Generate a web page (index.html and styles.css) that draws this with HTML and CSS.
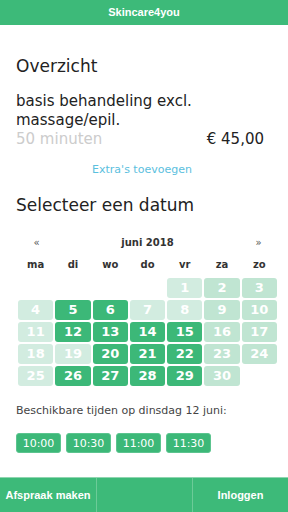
FILE: index.html
```html
<!DOCTYPE html>
<html lang="nl">
<head>
  <meta charset="UTF-8">
  <title>Skincare4you</title>
  <link rel="stylesheet" href="styles.css">
</head>
<body>
  <header class="topbar">Skincare4you</header>

  <main class="content">
    <h2 class="section-title">Overzicht</h2>

    <div class="treatment">
      <div class="treatment-name">basis behandeling excl. massage/epil.</div>
      <div class="treatment-meta">
        <span class="duration">50 minuten</span>
        <span class="price">€ 45,00</span>
      </div>
    </div>

    <a class="extras" href="#">Extra's toevoegen</a>

    <h2 class="section-title date-title">Selecteer een datum</h2>

    <div class="calendar">
      <div class="cal-head">
        <span class="cal-nav">«</span>
        <span class="cal-month">juni 2018</span>
        <span class="cal-nav">»</span>
      </div>
      <div class="cal-grid">
        <span class="dow">ma</span><span class="dow">di</span><span class="dow">wo</span><span class="dow">do</span><span class="dow">vr</span><span class="dow">za</span><span class="dow">zo</span>

        <span class="empty"></span><span class="empty"></span><span class="empty"></span><span class="empty"></span>
        <span class="day off">1</span><span class="day weekend">2</span><span class="day weekend">3</span>

        <span class="day off">4</span><span class="day open">5</span><span class="day open">6</span><span class="day off">7</span><span class="day off">8</span><span class="day weekend">9</span><span class="day weekend">10</span>

        <span class="day off">11</span><span class="day open">12</span><span class="day open">13</span><span class="day open">14</span><span class="day open">15</span><span class="day weekend">16</span><span class="day weekend">17</span>

        <span class="day off">18</span><span class="day off">19</span><span class="day open">20</span><span class="day open">21</span><span class="day open">22</span><span class="day weekend">23</span><span class="day weekend">24</span>

        <span class="day off">25</span><span class="day open">26</span><span class="day open">27</span><span class="day open">28</span><span class="day open">29</span><span class="day weekend">30</span>
      </div>
    </div>

    <p class="times-label">Beschikbare tijden op dinsdag 12 juni:</p>
    <div class="times">
      <button class="time">10:00</button>
      <button class="time">10:30</button>
      <button class="time">11:00</button>
      <button class="time">11:30</button>
    </div>
  </main>

  <footer class="tabbar">
    <a class="tab" href="#">Afspraak maken</a>
    <a class="tab" href="#"></a>
    <a class="tab" href="#">Inloggen</a>
  </footer>
</body>
</html>
```

FILE: styles.css
```css
body {
  margin: 0;
  font-family: "DejaVu Sans", Verdana, sans-serif;
  color: #222;
  background: #fff;
  height: 512px;
  position: relative;
}
.topbar {
  height: 25px;
  line-height: 25px;
  background-color: #3dba79;
  color: #fff;
  text-align: center;
  font-family: "Liberation Sans", Arial, sans-serif;
  font-weight: bold;
  font-size: 11px;
}
.content {
  padding: 31px 16px 0 16px;
}
.section-title {
  margin: 0;
  font-size: 17px;
  font-weight: normal;
  line-height: 20px;
  color: #222;
}
.treatment {
  margin-top: 16px;
  font-size: 15px;
  line-height: 19px;
}
.treatment-name {
  padding-right: 40px;
}
.treatment-meta {
  display: flex;
  justify-content: space-between;
  padding-right: 8px;
}
.duration {
  color: #ccc;
}
.extras {
  display: block;
  margin-top: 14px;
  text-align: center;
  font-size: 11px;
  color: #5bc0de;
  text-decoration: none;
  padding-right: 4px;
}
.date-title {
  margin-top: 19px;
}
.calendar {
  margin: 20px 0 0 2px;
  width: 259px;
}
.cal-head {
  display: grid;
  grid-template-columns: 1fr 5fr 1fr;
  text-align: center;
  font-size: 10px;
  font-weight: bold;
  color: #333;
  height: 16px;
  line-height: 16px;
}
.cal-nav {
  font-weight: normal;
  color: #555;
}
.cal-grid {
  display: grid;
  grid-template-columns: repeat(7, 1fr);
  column-gap: 2px;
  row-gap: 2px;
  margin-top: 6px;
}
.dow {
  text-align: center;
  font-size: 10px;
  font-weight: bold;
  color: #333;
  height: 19px;
  line-height: 16px;
}
.day {
  height: 20px;
  line-height: 20px;
  border-radius: 3px;
  text-align: center;
  color: #fff;
  font-size: 13px;
  font-weight: bold;
}
.day.open {
  background-color: #3cb878;
}
.day.off {
  background-color: #d2ece0;
}
.day.weekend {
  background-color: #c0e5d2;
}
.times-label {
  margin: 18px 0 0 0;
  font-size: 11px;
  color: #444;
}
.times {
  display: flex;
  gap: 5px;
  margin-top: 16px;
}
.time {
  width: 45px;
  height: 20px;
  padding: 0;
  border: 1px solid #5cc48f;
  border-radius: 3px;
  background-color: #3cb878;
  color: #fff;
  font-family: "DejaVu Sans", Verdana, sans-serif;
  font-size: 11px;
}
.tabbar {
  position: absolute;
  left: 0;
  right: 0;
  bottom: 0;
  height: 34px;
  display: grid;
  grid-template-columns: repeat(3, 1fr);
  background-color: #3dba79;
  border-top: 1px solid #8fd6b0;
}
.tab {
  display: block;
  line-height: 34px;
  text-align: center;
  color: #fff;
  text-decoration: none;
  font-family: "Liberation Sans", Arial, sans-serif;
  font-weight: bold;
  font-size: 11px;
  border-left: 1px solid #6ccb98;
}
.tab:first-child {
  border-left: none;
}
```
